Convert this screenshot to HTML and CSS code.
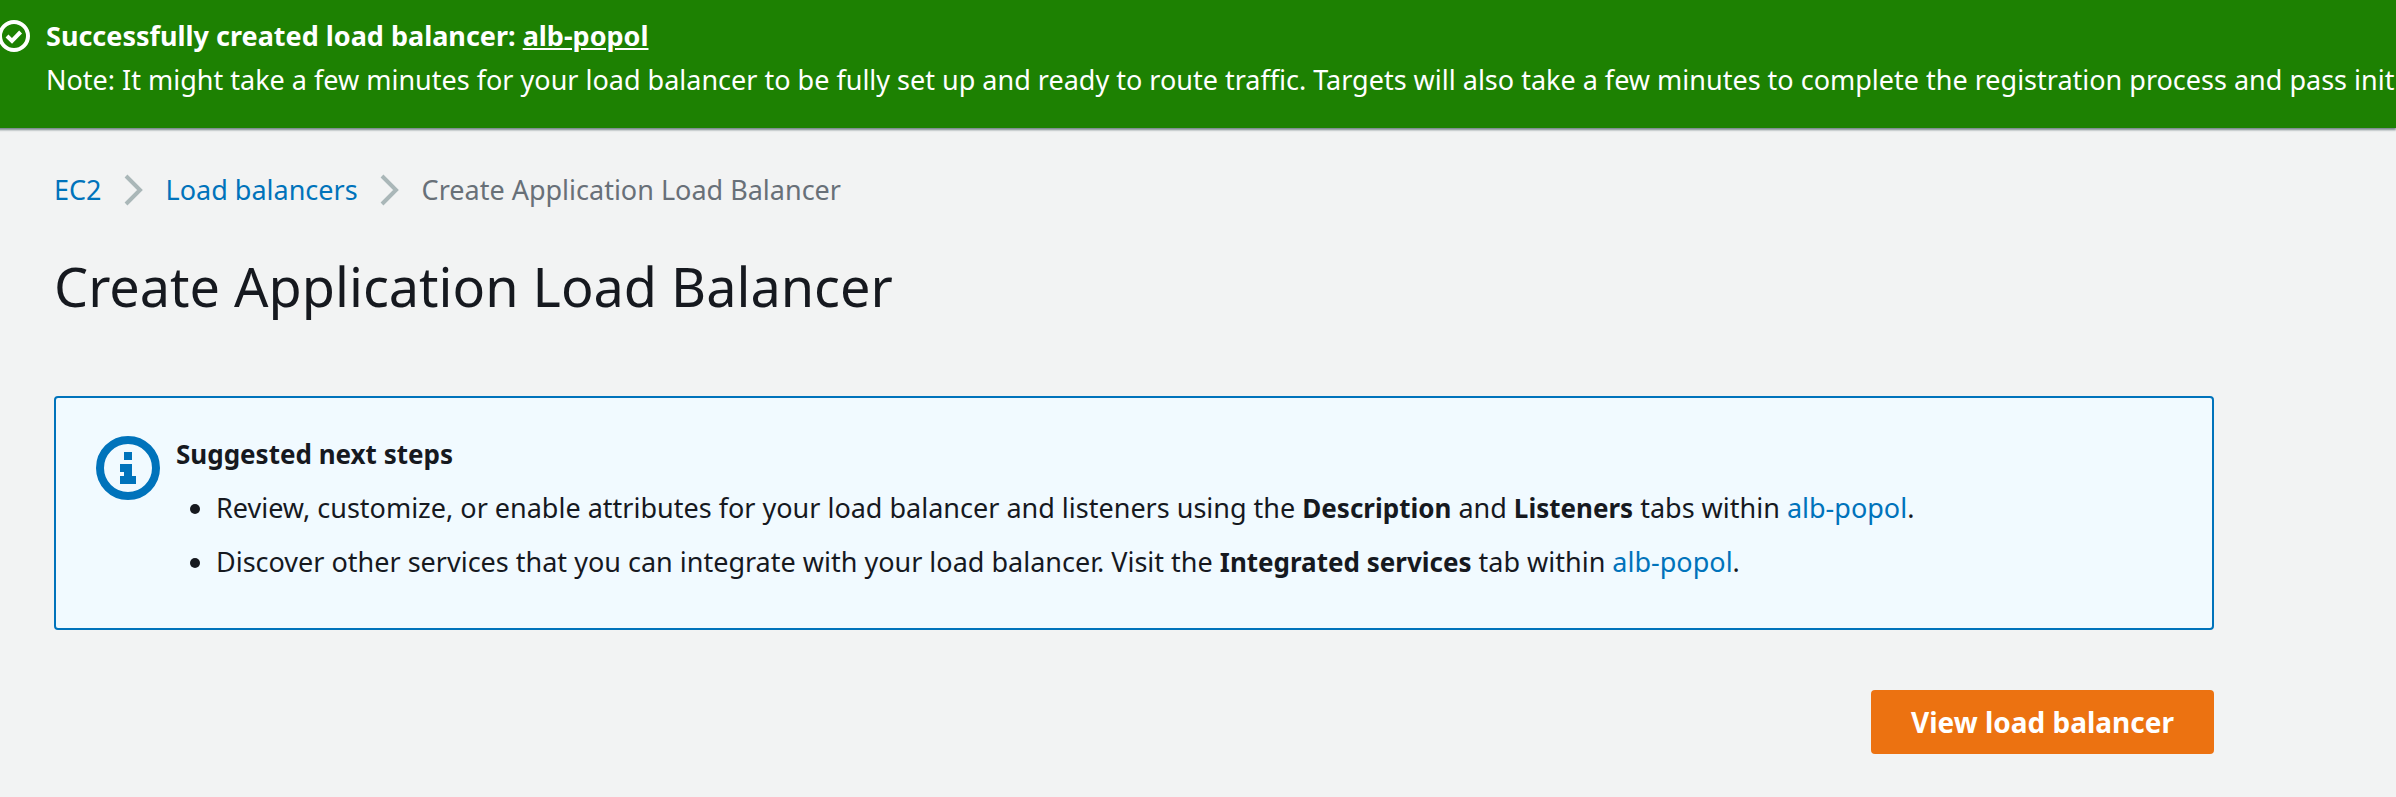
FILE: index.html
```
<!DOCTYPE html>
<html lang="en">
<head>
    <meta charset="UTF-8">
    <meta name="viewport" content="width=device-width, initial-scale=1.0">
    <title>Create Application Load Balancer</title>
    <link rel="stylesheet" href="styles.css">
</head>
<body>
    <div class="flash" role="status">
        <svg class="flash-icon" viewBox="0 0 16 16" aria-hidden="true">
            <circle cx="8" cy="8" r="7"/>
            <path d="M4.5 8 L7 10.5 L11.3 6"/>
        </svg>
        <div class="flash-text">
            <p><b>Successfully created load balancer: <a href="#">alb-popol</a></b></p>
            <p>Note: It might take a few minutes for your load balancer to be fully set up and ready to route traffic. Targets will also take a few minutes to complete the registration process and pass init</p>
        </div>
    </div>

    <main class="content">
        <nav class="breadcrumbs" aria-label="Breadcrumbs">
            <a href="#">EC2</a>
            <svg class="chevron" viewBox="0 0 20 32" aria-hidden="true"><path d="M2 2 L16 16 L2 30"/></svg>
            <a href="#">Load balancers</a>
            <svg class="chevron" viewBox="0 0 20 32" aria-hidden="true"><path d="M2 2 L16 16 L2 30"/></svg>
            <span>Create Application Load Balancer</span>
        </nav>

        <h1>Create Application Load Balancer</h1>

        <section class="alert">
            <svg class="alert-icon" viewBox="0 0 16 16" aria-hidden="true">
                <circle cx="8" cy="8" r="7"/>
                <path d="M7 4h2v2H7z M6 7h3v3h1v2H6v-2h1V9H6z"/>
            </svg>
            <div class="alert-text">
                <h2>Suggested next steps</h2>
                <ul>
                    <li>Review, customize, or enable attributes for your load balancer and listeners using the <b>Description</b> and <b>Listeners</b> tabs within <a href="#">alb-popol</a>.</li>
                    <li>Discover other services that you can integrate with your load balancer. Visit the <b>Integrated services</b> tab within <a href="#">alb-popol</a>.</li>
                </ul>
            </div>
        </section>

        <div class="actions">
            <button type="button" class="primary">View load balancer</button>
        </div>
    </main>
</body>
</html>
```
FILE: styles.css
```
* {
    box-sizing: border-box;
}
body {
    margin: 0;
    font-family: "Noto Sans", sans-serif;
    font-size: 27px;
    line-height: 44px;
    color: #16191f;
    background: #f2f3f3;
    overflow: hidden;
}
p, h1, h2, ul {
    margin: 0;
}
a {
    color: #0073bb;
    text-decoration: none;
}

/* success message across the top */
.flash {
    display: flex;
    gap: 16px;
    padding: 14px 0 26px;
    margin-left: -2px;
    background: #1d8102;
    color: #fff;
    box-shadow: 0 2px 2px rgba(0, 28, 36, 0.5);
}
.flash-icon {
    flex: none;
    width: 32px;
    height: 32px;
    margin-top: 6px;
    fill: none;
    stroke: #fff;
    stroke-width: 2;
}
.flash-text {
    white-space: nowrap;
}
.flash a {
    color: #fff;
    text-decoration: underline;
}

.content {
    padding: 40px 182px 40px 54px;
}
.breadcrumbs {
    display: flex;
    align-items: center;
    gap: 22px;
    color: #687078;
}
.chevron {
    width: 20px;
    height: 32px;
    fill: none;
    stroke: #aab7b8;
    stroke-width: 4;
}
h1 {
    margin-top: 38px;
    font-size: 54px;
    font-weight: 400;
    line-height: 72px;
}

.alert {
    display: flex;
    gap: 16px;
    margin-top: 74px;
    padding: 34px 40px 44px;
    border: 2px solid #0073bb;
    border-radius: 4px;
    background: #f1faff;
}
.alert-icon {
    flex: none;
    width: 64px;
    height: 64px;
    margin-top: 4px;
    fill: #0073bb;
}
.alert-icon circle {
    fill: none;
    stroke: #0073bb;
    stroke-width: 2;
}
.alert h2, .alert b {
    font-size: 26px;
}
.alert ul {
    padding-left: 40px;
}
.alert li {
    margin-top: 10px;
}

.actions {
    display: flex;
    justify-content: flex-end;
    margin-top: 60px;
}
.primary {
    height: 64px;
    padding: 0 40px;
    border: none;
    border-radius: 4px;
    background: #ec7211;
    color: #fff;
    font-family: inherit;
    font-size: 28px;
    font-weight: 700;
    cursor: pointer;
}
```
